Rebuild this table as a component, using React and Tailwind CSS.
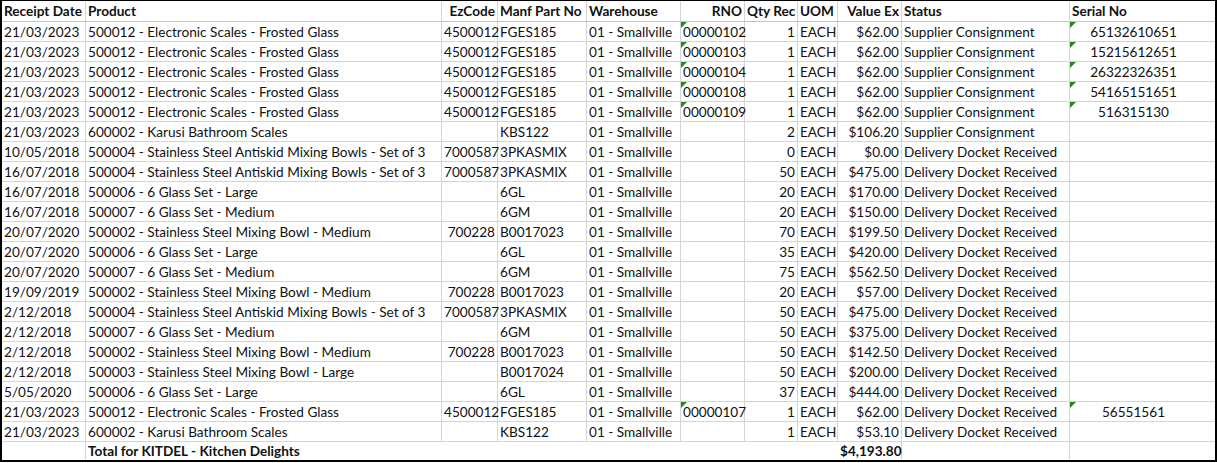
import React from "react";

const COLS = [
  { key: "date", w: "w-[84px]", align: "text-left" },
  { key: "product", w: "w-[356px]", align: "text-left" },
  { key: "ez", w: "w-[56px]", align: "text-right" },
  { key: "manf", w: "w-[89px]", align: "text-left" },
  { key: "wh", w: "w-[94px]", align: "text-left" },
  { key: "rno", w: "w-[64px]", align: "text-left" },
  { key: "qty", w: "w-[53px]", align: "text-right" },
  { key: "uom", w: "w-[40px]", align: "text-left" },
  { key: "val", w: "w-[64px]", align: "text-right" },
  { key: "status", w: "w-[168px]", align: "text-left" },
  { key: "serial", w: "w-[145px]", align: "text-center" },
];

const HEAD = ["Receipt Date", "Product", "EzCode", "Manf Part No", "Warehouse", "RNO", "Qty Rec", "UOM", "Value Ex", "Status", "Serial No"];
const HEAD_ALIGN = ["text-left", "text-left", "text-right", "text-left", "text-left", "text-right", "text-right", "text-left", "text-right", "text-left", "text-left"];

const ES = "500012 - Electronic Scales - Frosted Glass";
const KB = "600002 - Karusi Bathroom Scales";
const AS = "500004 - Stainless Steel Antiskid Mixing Bowls - Set of 3";
const GL = "500006 - 6 Glass Set - Large";
const GM = "500007 - 6 Glass Set - Medium";
const MB = "500002 - Stainless Steel Mixing Bowl - Medium";
const LB = "500003 - Stainless Steel Mixing Bowl - Large";
const SC = "Supplier Consignment";
const DD = "Delivery Docket Received";

const ROWS = [
  ["21/03/2023", ES, "4500012", "FGES185", "00000102", "1", "$62.00", SC, "65132610651"],
  ["21/03/2023", ES, "4500012", "FGES185", "00000103", "1", "$62.00", SC, "15215612651"],
  ["21/03/2023", ES, "4500012", "FGES185", "00000104", "1", "$62.00", SC, "26322326351"],
  ["21/03/2023", ES, "4500012", "FGES185", "00000108", "1", "$62.00", SC, "54165151651"],
  ["21/03/2023", ES, "4500012", "FGES185", "00000109", "1", "$62.00", SC, "516315130"],
  ["21/03/2023", KB, "", "KBS122", "", "2", "$106.20", SC, ""],
  ["10/05/2018", AS, "7000587", "3PKASMIX", "", "0", "$0.00", DD, ""],
  ["16/07/2018", AS, "7000587", "3PKASMIX", "", "50", "$475.00", DD, ""],
  ["16/07/2018", GL, "", "6GL", "", "20", "$170.00", DD, ""],
  ["16/07/2018", GM, "", "6GM", "", "20", "$150.00", DD, ""],
  ["20/07/2020", MB, "700228", "B0017023", "", "70", "$199.50", DD, ""],
  ["20/07/2020", GL, "", "6GL", "", "35", "$420.00", DD, ""],
  ["20/07/2020", GM, "", "6GM", "", "75", "$562.50", DD, ""],
  ["19/09/2019", MB, "700228", "B0017023", "", "20", "$57.00", DD, ""],
  ["2/12/2018", AS, "7000587", "3PKASMIX", "", "50", "$475.00", DD, ""],
  ["2/12/2018", GM, "", "6GM", "", "50", "$375.00", DD, ""],
  ["2/12/2018", MB, "700228", "B0017023", "", "50", "$142.50", DD, ""],
  ["2/12/2018", LB, "", "B0017024", "", "50", "$200.00", DD, ""],
  ["5/05/2020", GL, "", "6GL", "", "37", "$444.00", DD, ""],
  ["21/03/2023", ES, "4500012", "FGES185", "00000107", "1", "$62.00", DD, "56551561"],
  ["21/03/2023", KB, "", "KBS122", "", "1", "$53.10", DD, ""],
];

function Tri() {
  return (
    <span className="absolute left-0 top-0 w-0 h-0 border-t-[6px] border-t-[#1f8a1f] border-r-[6px] border-r-transparent" />
  );
}

function Cell({ col, last, children, tri, extra = "" }) {
  return (
    <div
      className={`relative ${col.w} shrink-0 h-full overflow-visible whitespace-nowrap px-[2px] pt-[1px] ${col.align} ${last ? "" : "border-r border-[#d4d4d4]"} ${extra}`}
    >
      {tri && <Tri />}
      {children}
    </div>
  );
}

export default function App() {
  return (
    <div
      className="w-[1217px] bg-white text-[#111] text-[13.6px] leading-[19px]"
      style={{ fontFamily: "Lato, 'Noto Sans', sans-serif" }}
    >
      <div className="border-t border-l-2 border-r-2 border-b-2 border-black">
        <div className="flex h-[21px] border-b border-[#c6c6c6] font-bold">
          {COLS.map((c, i) => (
            <div
              key={c.key}
              className={`${c.w} shrink-0 h-full whitespace-nowrap px-[2px] pt-[1px] ${HEAD_ALIGN[i]} ${i === COLS.length - 1 ? "" : "border-r border-[#d4d4d4]"}`}
            >
              {HEAD[i]}
            </div>
          ))}
        </div>
        {ROWS.map((r, ri) => {
          const vals = [r[0], r[1], r[2], r[3], "01 - Smallville", r[4], r[5], "EACH", r[6], r[7], r[8]];
          return (
            <div key={ri} className="flex h-[20px] border-b border-[#d4d4d4]">
              {COLS.map((c, i) => (
                <Cell
                  key={c.key}
                  col={c}
                  last={i === COLS.length - 1}
                  tri={(i === 5 || i === 10) && vals[i] !== ""}
                  extra={i === 10 ? "pr-[20px]" : ""}
                >
                  {vals[i]}
                </Cell>
              ))}
            </div>
          );
        })}
        <div className="flex h-[18px] font-bold">
          <div className="w-[84px] shrink-0 h-full border-r border-[#d4d4d4]" />
          <div className="w-[752px] shrink-0 h-full px-[2px] whitespace-nowrap">Total for KITDEL - Kitchen Delights</div>
          <div className="w-[64px] shrink-0 h-full px-[2px] text-right border-r border-[#d4d4d4]">$4,193.80</div>
          <div className="w-[168px] shrink-0 h-full border-r border-[#d4d4d4]" />
          <div className="w-[145px] shrink-0 h-full" />
        </div>
      </div>
    </div>
  );
}
